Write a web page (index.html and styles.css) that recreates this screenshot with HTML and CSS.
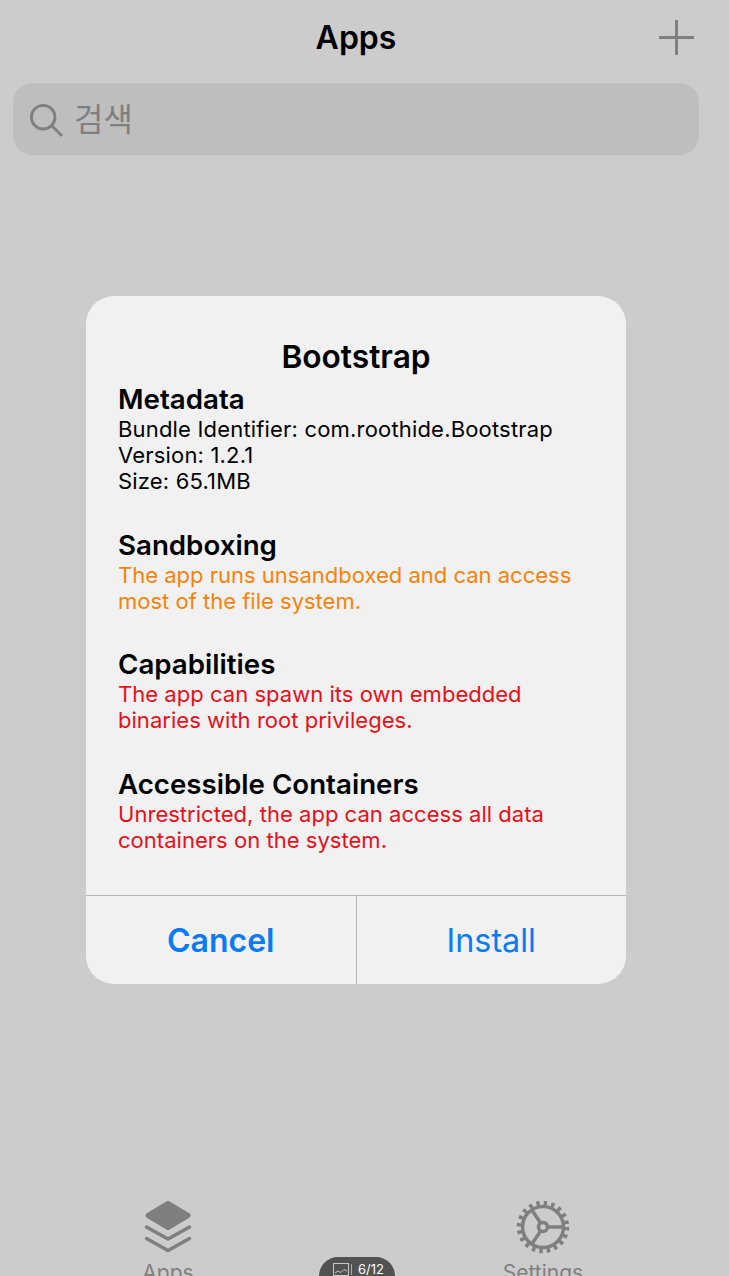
FILE: index.html
```html
<!DOCTYPE html>
<html lang="en">
<head>
    <meta charset="UTF-8">
    <meta name="viewport" content="width=device-width, initial-scale=1.0">
    <title>Apps</title>
    <link rel="stylesheet" href="styles.css">
</head>
<body>
    <div class="screen">
        <header class="nav-bar">
            <h1 class="nav-title">Apps</h1>
            <svg class="add-icon" viewBox="0 0 36 36" aria-hidden="true">
                <path d="M18 1V35M1 18H35"/>
            </svg>
        </header>

        <div class="search-box">
            <svg class="search-icon" viewBox="0 0 36 36" aria-hidden="true">
                <circle cx="15" cy="15" r="12.5"/>
                <path d="M24 24L34 34"/>
            </svg>
            <span class="search-hint">검색</span>
        </div>

        <main class="content">
            <div class="alert">
                <div class="alert-body">
                    <h2 class="alert-title">Bootstrap</h2>

                    <section class="info-group">
                        <h3>Metadata</h3>
                        <p>Bundle Identifier: com.roothide.Bootstrap<br>Version: 1.2.1<br>Size: 65.1MB</p>
                    </section>

                    <section class="info-group">
                        <h3>Sandboxing</h3>
                        <p class="warn">The app runs unsandboxed and can access<br>most of the file system.</p>
                    </section>

                    <section class="info-group">
                        <h3>Capabilities</h3>
                        <p class="danger">The app can spawn its own embedded<br>binaries with root privileges.</p>
                    </section>

                    <section class="info-group">
                        <h3>Accessible Containers</h3>
                        <p class="danger">Unrestricted, the app can access all data<br>containers on the system.</p>
                    </section>
                </div>
                <div class="alert-actions">
                    <button class="action action-bold">Cancel</button>
                    <button class="action">Install</button>
                </div>
            </div>
        </main>

        <nav class="tab-bar">
            <div class="tab tab-apps">
                <svg class="tab-icon" viewBox="0 0 50 54" aria-hidden="true">
                    <path class="layer-top" d="M25 3.500L45 15.500L25 27.500L5 15.500Z"/>
                    <path class="layer-line" d="M3.500 27L25 39L46.500 27"/>
                    <path class="layer-line" d="M3.500 38.500L25 50.500L46.500 38.500"/>
                </svg>
                <span>Apps</span>
            </div>
            <div class="tab tab-settings">
                <svg class="tab-icon" viewBox="0 0 54 54" aria-hidden="true">
                    <circle class="gear-teeth" cx="27" cy="27" r="24"/>
                    <circle class="gear-ring" cx="27" cy="27" r="20.500"/>
                    <circle class="gear-hub" cx="27" cy="27" r="4.500"/>
                    <path class="gear-spoke" d="M31.500 27H47M24.700 23L15.500 9.500M24.700 31L15.500 44.500"/>
                </svg>
                <span>Settings</span>
            </div>
        </nav>

        <div class="page-pill">
            <svg class="pill-icon" viewBox="0 0 16 13" aria-hidden="true">
                <rect x="0.500" y="0.500" width="15" height="12"/>
                <path d="M2 10L5 8L8 9.500L11 6.500L14 8"/>
            </svg>
            <span class="pill-sep"></span>
            <span>6/12</span>
        </div>
    </div>
</body>
</html>
```

FILE: styles.css
```css
* {
    box-sizing: border-box;
}
html, body {
    margin: 0;
    padding: 0;
}
body {
    font-family: Inter, "Noto Sans CJK KR", sans-serif;
    background-color: #cccccc;
    color: #000;
}
.screen {
    position: relative;
    display: flex;
    flex-direction: column;
    width: 729px;
    height: 1276px;
    overflow: hidden;
}

/* top bar */
.nav-bar {
    position: relative;
    display: flex;
    justify-content: center;
    align-items: center;
    flex: none;
    height: 76px;
    padding-right: 17px;
}
.nav-title {
    margin: 0 0 2px;
    font-size: 32px;
    font-weight: 600;
}
.add-icon {
    position: absolute;
    right: 35px;
    top: 20px;
    width: 35px;
    height: 35px;
}
.add-icon path {
    fill: none;
    stroke: #7f7f7f;
    stroke-width: 3;
    stroke-linecap: round;
}

/* search */
.search-box {
    display: flex;
    align-items: center;
    flex: none;
    height: 72px;
    margin: 7px 30px 0 13px;
    padding-left: 16px;
    border-radius: 20px;
    background-color: #bebebf;
}
.search-icon {
    width: 34px;
    height: 34px;
    margin-top: 1px;
    fill: none;
    stroke: #7f7f7f;
    stroke-width: 3;
    stroke-linecap: round;
}
.search-hint {
    margin: 0 0 5px 11px;
    font-family: "Noto Sans CJK KR", sans-serif;
    font-size: 32px;
    color: #7f7f7f;
}

/* alert */
.content {
    flex: 1;
    display: flex;
    justify-content: center;
    padding: 141px 17px 0 0;
}
.alert {
    display: flex;
    flex-direction: column;
    width: 540px;
    height: 688px;
    border-radius: 28px;
    background-color: #f1f1f1;
}
.alert-body {
    flex: 1;
    padding: 42px 32px 0;
}
.alert-title {
    margin: 0 0 6px;
    font-size: 31.700px;
    line-height: 38px;
    font-weight: 600;
    text-align: center;
}
.info-group {
    margin-bottom: 33.500px;
}
.info-group h3 {
    margin: 0;
    font-size: 27.700px;
    line-height: 34px;
    font-weight: 600;
}
.info-group p {
    margin: 0;
    font-size: 22px;
    line-height: 26px;
    letter-spacing: 0.18px;
}
.info-group .warn {
    color: #f5830c;
    letter-spacing: 0;
}
.info-group .danger {
    color: #e8101a;
    letter-spacing: 0.03px;
}
.alert-actions {
    display: flex;
    flex: none;
    height: 89px;
    border-top: 1px solid #b4b4b4;
}
.action {
    flex: 1;
    padding: 0;
    border: none;
    background: none;
    font-family: inherit;
    font-size: 32.300px;
    color: #0a7bf0;
}
.action-bold {
    font-size: 32px;
    font-weight: 600;
    border-right: 1px solid #b4b4b4;
}

/* bottom tabs */
.tab-bar {
    display: flex;
    flex: none;
    height: 76px;
    overflow: hidden;
}
.tab {
    display: flex;
    flex-direction: column;
    align-items: center;
    font-size: 21px;
    line-height: 26px;
    color: #7f7f7f;
}
.tab-apps {
    width: 120px;
    margin-left: 108px;
}
.tab-settings {
    width: 120px;
    margin-left: 255px;
}
.tab-icon {
    flex: none;
    width: 50px;
    height: 54px;
    margin-bottom: 6px;
}
.tab-settings .tab-icon {
    width: 54px;
}
.layer-top {
    fill: #7f7f7f;
    stroke: #7f7f7f;
    stroke-width: 5;
    stroke-linejoin: round;
}
.layer-line {
    fill: none;
    stroke: #7f7f7f;
    stroke-width: 3.500;
    stroke-linecap: round;
    stroke-linejoin: round;
}
.gear-teeth {
    fill: none;
    stroke: #7f7f7f;
    stroke-width: 4.500;
    stroke-dasharray: 3.500 4.040;
}
.gear-ring, .gear-hub {
    fill: none;
    stroke: #7f7f7f;
    stroke-width: 3.500;
}
.gear-spoke {
    fill: none;
    stroke: #7f7f7f;
    stroke-width: 3.500;
}

/* screenshot counter on top of everything */
.page-pill {
    position: absolute;
    left: 319px;
    top: 1257px;
    display: flex;
    align-items: center;
    width: 76px;
    height: 38px;
    padding: 0 0 14px 14px;
    border-radius: 19px;
    background-color: #525252;
    font-size: 13px;
    color: #fff;
}
.pill-icon {
    width: 16px;
    height: 13px;
    fill: none;
    stroke: #c8c8c8;
    stroke-width: 1;
}
.pill-sep {
    width: 1px;
    height: 11px;
    margin: 0 6px 0 2px;
    background-color: #aaa;
}
```
